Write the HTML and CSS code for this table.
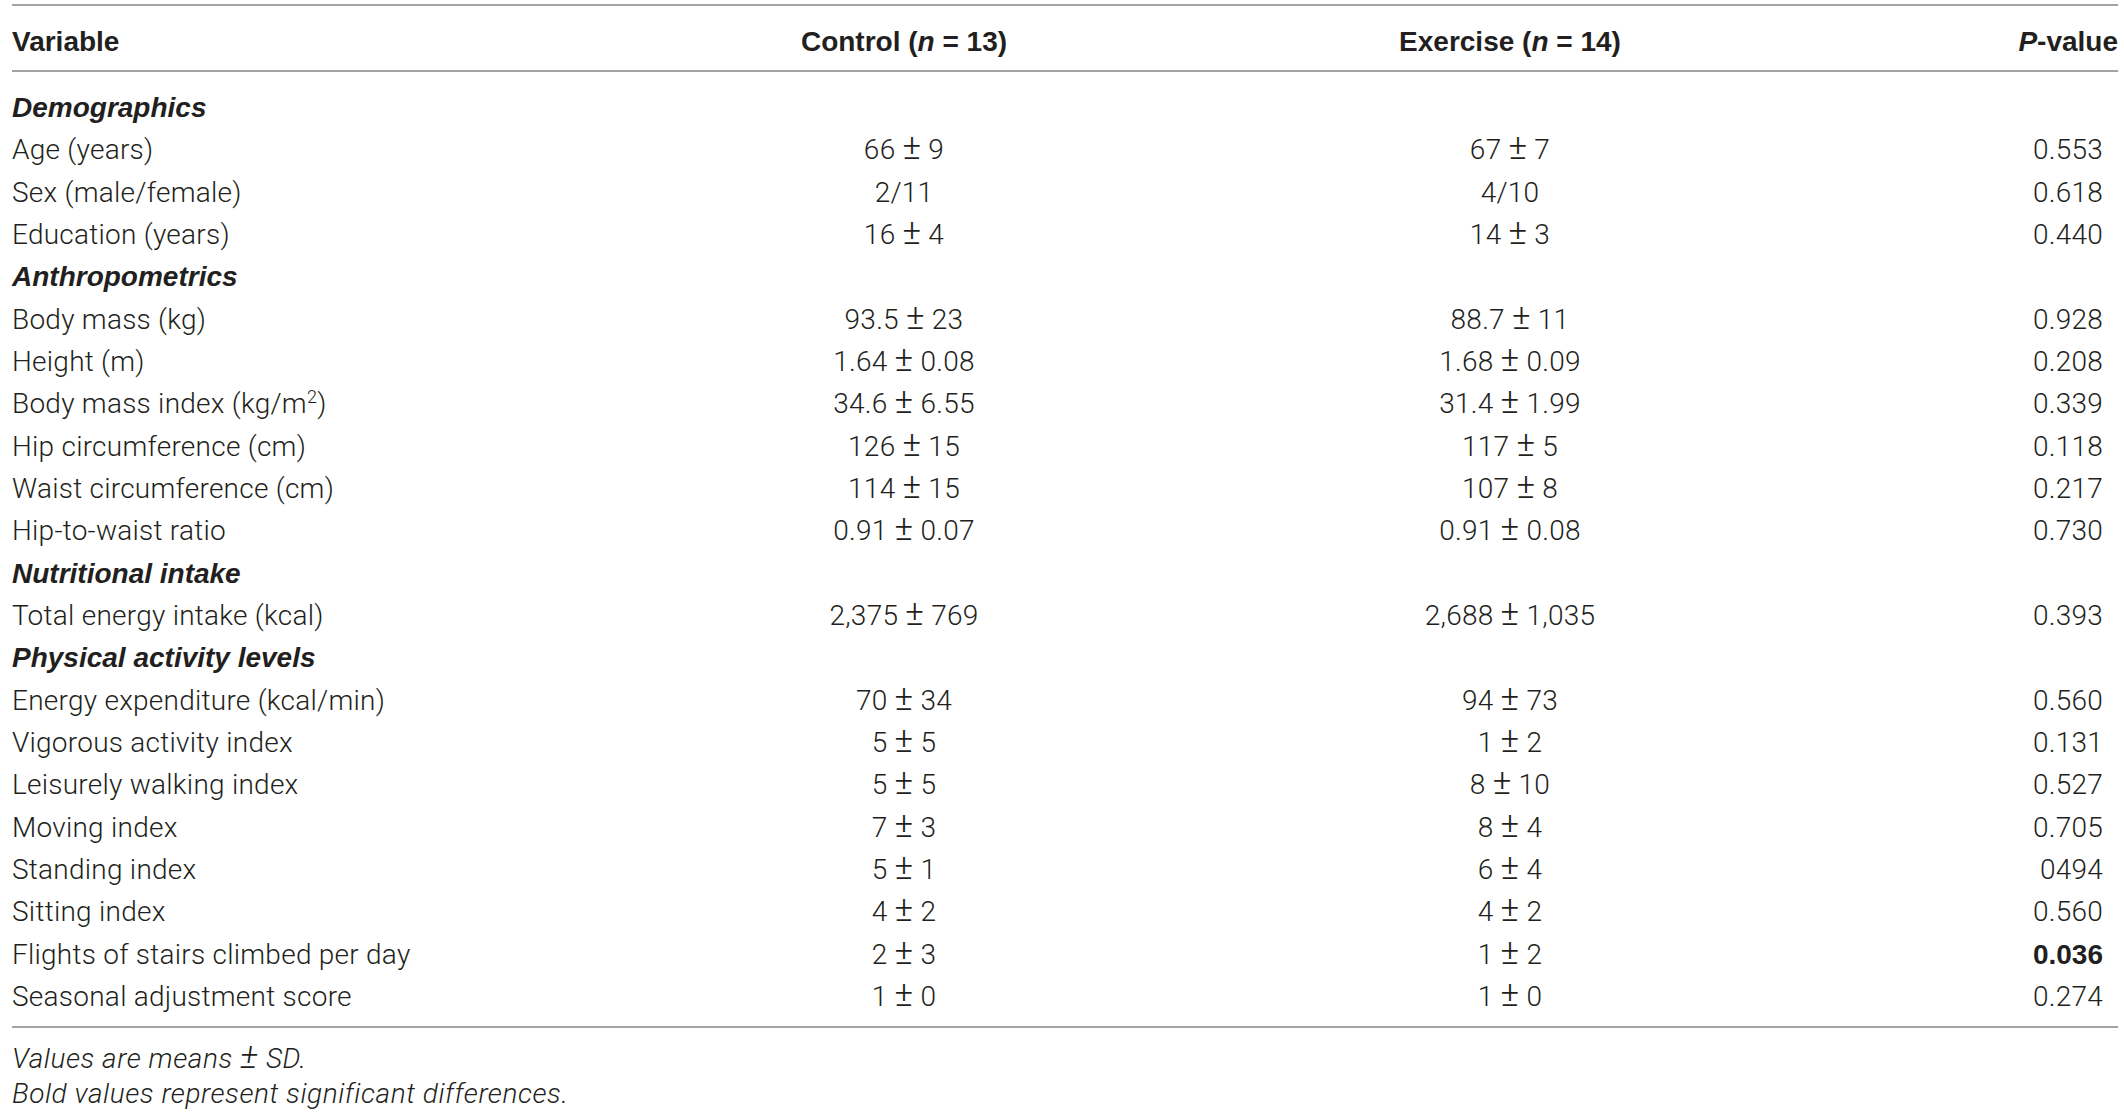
FILE: index.html
```html
<!DOCTYPE html>
<html lang="en">
<head>
    <meta charset="UTF-8">
    <meta name="viewport" content="width=device-width, initial-scale=1.0">
    <title>Participant characteristics</title>
    <link rel="stylesheet" href="styles.css">
</head>
<body>
    <div class="wrap">
        <table class="tbl">
            <colgroup>
                <col class="c-var">
                <col class="c-ctl">
                <col class="c-ex">
                <col class="c-p">
            </colgroup>
            <thead>
                <tr>
                    <th class="left">Variable</th>
                    <th>Control (<i>n</i> = 13)</th>
                    <th>Exercise (<i>n</i> = 14)</th>
                    <th class="right"><i>P</i>-value</th>
                </tr>
            </thead>
            <tbody>
                <tr class="sec first"><td colspan="4">Demographics</td></tr>
                <tr><td>Age (years)</td><td>66 <span class="pm">±</span> 9</td><td>67 <span class="pm">±</span> 7</td><td>0.553</td></tr>
                <tr><td>Sex (male/female)</td><td>2/11</td><td>4/10</td><td>0.618</td></tr>
                <tr><td>Education (years)</td><td>16 <span class="pm">±</span> 4</td><td>14 <span class="pm">±</span> 3</td><td>0.440</td></tr>
                <tr class="sec"><td colspan="4">Anthropometrics</td></tr>
                <tr><td>Body mass (kg)</td><td>93.5 <span class="pm">±</span> 23</td><td>88.7 <span class="pm">±</span> 11</td><td>0.928</td></tr>
                <tr><td>Height (m)</td><td>1.64 <span class="pm">±</span> 0.08</td><td>1.68 <span class="pm">±</span> 0.09</td><td>0.208</td></tr>
                <tr><td>Body mass index (kg/m<sup>2</sup>)</td><td>34.6 <span class="pm">±</span> 6.55</td><td>31.4 <span class="pm">±</span> 1.99</td><td>0.339</td></tr>
                <tr><td>Hip circumference (cm)</td><td>126 <span class="pm">±</span> 15</td><td>117 <span class="pm">±</span> 5</td><td>0.118</td></tr>
                <tr><td>Waist circumference (cm)</td><td>114 <span class="pm">±</span> 15</td><td>107 <span class="pm">±</span> 8</td><td>0.217</td></tr>
                <tr><td>Hip-to-waist ratio</td><td>0.91 <span class="pm">±</span> 0.07</td><td>0.91 <span class="pm">±</span> 0.08</td><td>0.730</td></tr>
                <tr class="sec"><td colspan="4">Nutritional intake</td></tr>
                <tr><td>Total energy intake (kcal)</td><td>2,375 <span class="pm">±</span> 769</td><td>2,688 <span class="pm">±</span> 1,035</td><td>0.393</td></tr>
                <tr class="sec"><td colspan="4">Physical activity levels</td></tr>
                <tr><td>Energy expenditure (kcal/min)</td><td>70 <span class="pm">±</span> 34</td><td>94 <span class="pm">±</span> 73</td><td>0.560</td></tr>
                <tr><td>Vigorous activity index</td><td>5 <span class="pm">±</span> 5</td><td>1 <span class="pm">±</span> 2</td><td>0.131</td></tr>
                <tr><td>Leisurely walking index</td><td>5 <span class="pm">±</span> 5</td><td>8 <span class="pm">±</span> 10</td><td>0.527</td></tr>
                <tr><td>Moving index</td><td>7 <span class="pm">±</span> 3</td><td>8 <span class="pm">±</span> 4</td><td>0.705</td></tr>
                <tr><td>Standing index</td><td>5 <span class="pm">±</span> 1</td><td>6 <span class="pm">±</span> 4</td><td>0494</td></tr>
                <tr><td>Sitting index</td><td>4 <span class="pm">±</span> 2</td><td>4 <span class="pm">±</span> 2</td><td>0.560</td></tr>
                <tr><td>Flights of stairs climbed per day</td><td>2 <span class="pm">±</span> 3</td><td>1 <span class="pm">±</span> 2</td><td><b>0.036</b></td></tr>
                <tr class="last"><td>Seasonal adjustment score</td><td>1 <span class="pm">±</span> 0</td><td>1 <span class="pm">±</span> 0</td><td>0.274</td></tr>
            </tbody>
        </table>
        <div class="notes">
            <p>Values are means <span class="pm">±</span> SD.</p>
            <p>Bold values represent significant differences.</p>
        </div>
    </div>
</body>
</html>
```

FILE: styles.css
```css
body {
    margin: 0;
    background: #fff;
    color: #231f20;
    font-family: Roboto, 'Liberation Sans', Arial, sans-serif;
    font-weight: 300;
    font-size: 28px;
    letter-spacing: 0.25px;
}
.wrap {
    padding: 4px 6px 0 12px;
}
.tbl {
    width: 2106px;
    border-collapse: separate;
    border-spacing: 0;
    table-layout: fixed;
}
.c-var { width: 592px; }
.c-ctl { width: 600px; }
.c-ex { width: 612px; }
.c-p { width: 302px; }

th {
    font-family: 'Liberation Sans', Arial, sans-serif;
    font-weight: 700;
    letter-spacing: 0;
    line-height: 42px;
    padding: 15px 0 7px;
    text-align: center;
    border-top: 2px solid #a3a3a3;
    border-bottom: 2px solid #a3a3a3;
}
th.left { text-align: left; }
th.right { text-align: right; }

td {
    line-height: 42.33px;
    padding: 0;
    text-align: center;
    white-space: nowrap;
}
td:first-child { text-align: left; }
td:last-child { text-align: right; padding-right: 15px; }
td b {
    font-family: 'Liberation Sans', Arial, sans-serif;
    font-weight: 700;
    letter-spacing: 0;
}

/* wider plus-minus like the original typeface */
.pm {
    font-size: 35px;
    line-height: 0;
}

.sec td {
    font-family: 'Liberation Sans', Arial, sans-serif;
    font-weight: 700;
    font-style: italic;
    letter-spacing: 0;
    text-align: left;
}
.first td { padding-top: 15px; }
.last td {
    padding-bottom: 8px;
    border-bottom: 2px solid #a3a3a3;
}
sup {
    font-size: 18px;
    line-height: 0;
}
.notes {
    margin-top: 13px;
    font-style: italic;
    letter-spacing: 0.55px;
}
.notes p {
    margin: 0;
    line-height: 35px;
}
```
